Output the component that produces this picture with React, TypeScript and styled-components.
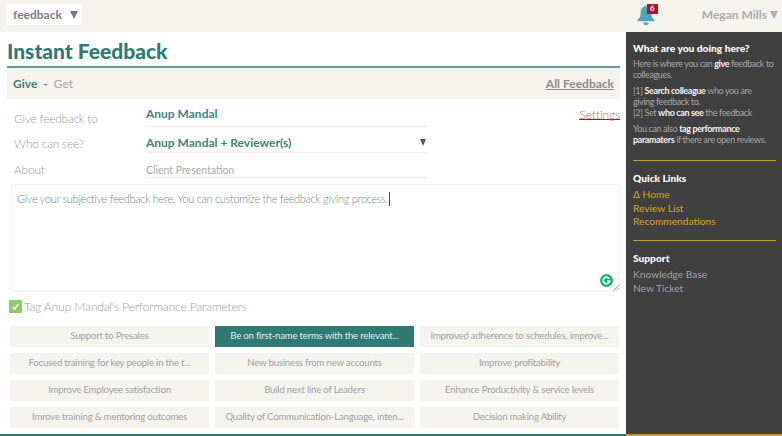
import React from 'react';
import styled, { createGlobalStyle } from 'styled-components';

const GlobalStyle = createGlobalStyle`
    html, body {
        margin: 0;
        padding: 0;
        background: #fff;
    }
    * {
        box-sizing: border-box;
    }
`;

const Page = styled.div`
    width: 782px;
    height: 436px;
    overflow: hidden;
    display: flex;
    flex-direction: column;
    font-family: Lato, "Noto Sans", sans-serif;
    color: #8a8a86;
`;

const TopBar = styled.header`
    height: 32px;
    flex: none;
    background: #f4f3ee;
    display: flex;
    align-items: center;
    padding: 0 4px 3px 7px;
`;

const AppSwitch = styled.div`
    width: 75px;
    height: 21px;
    background: #fff;
    display: flex;
    align-items: center;
    justify-content: space-between;
    padding: 0 4px 0 6px;
    font-size: 12px;
    font-weight: 700;
    color: #7d7d7a;
`;

const Caret = styled.span<{ $size: number; $color: string }>`
    width: 0;
    height: 0;
    border-left: ${(p) => p.$size * 0.55}px solid transparent;
    border-right: ${(p) => p.$size * 0.55}px solid transparent;
    border-top: ${(p) => p.$size}px solid ${(p) => p.$color};
`;

const BellWrap = styled.div`
    position: relative;
    margin-left: auto;
    width: 22px;
    height: 22px;
    margin-right: 44px;
`;

const Badge = styled.span`
    position: absolute;
    left: 11px;
    top: 0;
    width: 11px;
    height: 10px;
    background: #bb1020;
    color: #fff;
    font-size: 7.5px;
    font-weight: 700;
    line-height: 10px;
    text-align: center;
`;

const UserName = styled.div`
    display: flex;
    align-items: center;
    gap: 3px;
    font-size: 12px;
    font-weight: 700;
    color: #a9abab;
`;

const Body = styled.div`
    flex: 1;
    min-height: 0;
    display: flex;
`;

const Main = styled.main`
    width: 626px;
    flex: none;
    display: flex;
    flex-direction: column;
    padding: 0 6px 0 7px;
    border-bottom: 2px solid #2f7a74;
`;

const Title = styled.h1`
    margin: 0;
    height: 36px;
    padding-top: 7px;
    font-size: 21px;
    line-height: 24px;
    font-weight: 900;
    color: #2f7a74;
    border-bottom: 2px solid #5f9c97;
    flex: none;
`;

const TabBar = styled.nav`
    height: 31px;
    flex: none;
    background: #f4f3ee;
    display: flex;
    align-items: center;
    padding: 0 6px;
    font-size: 12px;
`;

const ActiveTab = styled.span`
    font-weight: 700;
    color: #3f7f7a;
`;

const TabDash = styled.span`
    margin: 0 6px;
    font-weight: 700;
    color: #777;
`;

const Tab = styled.span`
    color: #a5a5a2;
`;

const AllFeedback = styled.a`
    margin-left: auto;
    font-weight: 700;
    color: #8b8b88;
    text-decoration: underline;
`;

const Fields = styled.div`
    display: grid;
    grid-template-columns: 132px 282px 1fr;
    grid-template-rows: 28px 26px 25px;
    flex: none;
    height: 85px;
    padding-left: 7px;
`;

const FieldLabel = styled.div<{ $nudge: number }>`
    font-size: 12px;
    letter-spacing: -0.25px;
    color: #9b9b98;
    font-weight: 300;
    display: flex;
    align-items: center;
    padding-top: ${(p) => p.$nudge}px;
`;

const FieldValue = styled.div<{ $light?: boolean; $nudge: number }>`
    display: flex;
    align-items: center;
    justify-content: space-between;
    border-bottom: 1px solid #f0f0ee;
    padding: ${(p) => p.$nudge}px 2px 0 0;
    font-size: ${(p) => (p.$light ? 10.5 : 12)}px;
    font-weight: ${(p) => (p.$light ? 400 : 700)};
    color: ${(p) => (p.$light ? '#a2aaa8' : '#45807b')};
`;

const SettingsCell = styled.div`
    display: flex;
    justify-content: flex-end;
    align-items: flex-start;
    padding-top: 9px;
`;

const SettingsLink = styled.a`
    font-size: 12px;
    letter-spacing: -0.1px;
    line-height: 13px;
    height: 12px;
    font-weight: 300;
    color: #b06a6a;
    border-bottom: 1px solid #a01c1c;
`;

const EditorBox = styled.div`
    position: relative;
    flex: none;
    height: 108px;
    margin-left: 4px;
    border: 1px solid #f1f1ee;
    border-radius: 2px;
    padding: 7px 5px;
    font-size: 11px;
    letter-spacing: -0.3px;
    line-height: 14px;
    font-weight: 300;
    color: #6f8a85;
`;

const TextCursor = styled.span`
    display: inline-block;
    width: 1px;
    height: 14px;
    background: #444;
    vertical-align: top;
    margin-left: 1px;
`;

const GrammarlyBadge = styled.div`
    position: absolute;
    right: 6px;
    bottom: 4px;
    width: 13px;
    height: 13px;
    border-radius: 50%;
    background: #15b36f;
    display: flex;
    align-items: center;
    justify-content: center;
`;

const Resize = styled.svg`
    position: absolute;
    right: 0;
    bottom: 0;
    width: 6px;
    height: 6px;
`;

const TagRow = styled.div`
    flex: none;
    height: 28px;
    display: flex;
    align-items: center;
    gap: 2px;
    padding-left: 2px;
    font-size: 12.3px;
    letter-spacing: -0.25px;
    font-weight: 300;
    color: #9c9c9a;
`;

const CheckBox = styled.span`
    width: 13px;
    height: 13px;
    background: #8ecb64;
    display: flex;
    align-items: center;
    justify-content: center;
`;

const TagGrid = styled.div`
    flex: none;
    margin-top: 6px;
    padding-left: 3px;
    display: grid;
    grid-template-columns: 199px 199px 199px;
    column-gap: 6px;
    row-gap: 6.5px;
`;

const TagItem = styled.div<{ $active?: boolean }>`
    height: 20.5px;
    line-height: 20.5px;
    padding: 0 10px;
    text-align: center;
    font-size: 9.6px;
    letter-spacing: -0.2px;
    white-space: nowrap;
    overflow: hidden;
    background: ${(p) => (p.$active ? '#2f7a74' : '#f4f3ee')};
    color: ${(p) => (p.$active ? '#dfeeec' : '#a2a29e')};
`;

const Sidebar = styled.aside`
    flex: 1;
    background: #404040;
    border-bottom: 2px solid #c79a2a;
    padding: 9px 6px 0 7px;
    color: #a6a6a6;
    font-size: 9px;
    letter-spacing: -0.38px;
    line-height: 11px;
`;

const SideTitle = styled.h3`
    margin: 0 0 3px;
    font-size: 10.2px;
    letter-spacing: 0;
    line-height: 14px;
    font-weight: 900;
    color: #fff;
`;

const SideIntro = styled.section`
    padding-bottom: 10px;
`;

const SideText = styled.p`
    margin: 0 0 5px;
`;

const Strong = styled.b`
    color: #f2f2f2;
    font-weight: 700;
`;

const Divider = styled.hr`
    border: 0;
    height: 1px;
    background: #c79a2a;
    margin: 0;
`;

const SideSection = styled.section`
    padding: 10px 0 11.5px;
`;

const SideLink = styled.a<{ $gold?: boolean }>`
    display: block;
    font-size: 10.2px;
    letter-spacing: 0;
    line-height: 13.5px;
    color: ${(p) => (p.$gold ? '#d9a21b' : '#a2a2a2')};
`;

const tags = [
    'Support to Presales',
    'Be on first-name terms with the relevant...',
    'Improved adherence to schedules, improve...',
    'Focused training for key people in the t...',
    'New business from new accounts',
    'Improve profitability',
    'Improve Employee satisfaction',
    'Build next line of Leaders',
    'Enhance Productivity & service levels',
    'Imrove training & mentoring outcomes',
    'Quality of Communication-Language, inten...',
    'Decision making Ability',
];

const App: React.FC = () => {
    return (
        <Page>
            <GlobalStyle />
            <TopBar>
                <AppSwitch>
                    feedback
                    <Caret $size={8} $color="#7a7a7a" />
                </AppSwitch>
                <BellWrap>
                    <svg width="20" height="22" viewBox="0 0 20 22">
                        <path
                            d="M10 1.5c.9 0 1.4.6 1.4 1.4 2.8.7 3.9 3 3.9 5.8 0 3.4.8 5.4 3.2 7.3v1.3H1.5V15.700c2.400-1.900 3.200-3.900 3.200-7.300 0-2.800 1.100-5.100 3.900-5.800C8.600 2.100 9.100 1.500 10 1.500z"
                            fill="#4fa6c4"
                        />
                        <path d="M7.300 18.500h5.400a2.700 2.700 0 0 1-5.400 0z" fill="#4fa6c4" />
                    </svg>
                    <Badge>6</Badge>
                </BellWrap>
                <UserName>
                    Megan Mills
                    <Caret $size={8} $color="#a9abab" />
                </UserName>
            </TopBar>
            <Body>
                <Main>
                    <Title>Instant Feedback</Title>
                    <TabBar>
                        <ActiveTab>Give</ActiveTab>
                        <TabDash>-</TabDash>
                        <Tab>Get</Tab>
                        <AllFeedback>All Feedback</AllFeedback>
                    </TabBar>
                    <Fields>
                        <FieldLabel $nudge={10}>Give feedback to</FieldLabel>
                        <FieldValue $nudge={2}>Anup Mandal</FieldValue>
                        <SettingsCell>
                            <SettingsLink>Settings</SettingsLink>
                        </SettingsCell>
                        <FieldLabel $nudge={6}>Who can see?</FieldLabel>
                        <FieldValue $nudge={6}>
                            Anup Mandal + Reviewer(s)
                            <Caret $size={7} $color="#555" />
                        </FieldValue>
                        <div />
                        <FieldLabel $nudge={7}>About</FieldLabel>
                        <FieldValue $light $nudge={9}>
                            Client Presentation
                        </FieldValue>
                        <div />
                    </Fields>
                    <EditorBox>
                        Give your subjective feedback here. You can customize the feedback giving process.
                        <TextCursor />
                        <GrammarlyBadge>
                            <svg width="9" height="9" viewBox="0 0 10 10" fill="none">
                                <path
                                    d="M8.300 3.200A3.700 3.700 0 1 0 8.700 5.500H5.600"
                                    stroke="#fff"
                                    strokeWidth="1.700"
                                />
                            </svg>
                        </GrammarlyBadge>
                        <Resize viewBox="0 0 6 6">
                            <path d="M0.500 5.500L5.500 0.500M3 5.500L5.500 3" stroke="#888" strokeWidth="0.800" />
                        </Resize>
                    </EditorBox>
                    <TagRow>
                        <CheckBox>
                            <svg width="9" height="9" viewBox="0 0 10 10" fill="none">
                                <path d="M2 5.500L4.200 7.800L8.200 2.200" stroke="#fff" strokeWidth="1.600" />
                            </svg>
                        </CheckBox>
                        Tag Anup Mandal's Performance Parameters
                    </TagRow>
                    <TagGrid>
                        {tags.map((tag, i) => (
                            <TagItem key={tag} $active={i === 1}>
                                {tag}
                            </TagItem>
                        ))}
                    </TagGrid>
                </Main>
                <Sidebar>
                    <SideIntro>
                        <SideTitle>What are you doing here?</SideTitle>
                        <SideText>
                            Here is where you can <Strong>give</Strong> feedback to
                            <br />
                            colleagues.
                        </SideText>
                        <SideText>
                            [1] <Strong>Search colleague</Strong> who you are
                            <br />
                            giving feedback to.
                            <br />
                            [2] Set <Strong>who can see</Strong> the feedback
                        </SideText>
                        <SideText>
                            You can also <Strong>tag performance</Strong>
                            <br />
                            <Strong>paramaters</Strong> if there are open reviews.
                        </SideText>
                    </SideIntro>
                    <Divider />
                    <SideSection>
                        <SideTitle>Quick Links</SideTitle>
                        <SideLink $gold>Δ Home</SideLink>
                        <SideLink $gold>Review List</SideLink>
                        <SideLink $gold>Recommendations</SideLink>
                    </SideSection>
                    <Divider />
                    <SideSection>
                        <SideTitle>Support</SideTitle>
                        <SideLink>Knowledge Base</SideLink>
                        <SideLink>New Ticket</SideLink>
                    </SideSection>
                </Sidebar>
            </Body>
        </Page>
    );
};

export default App;
